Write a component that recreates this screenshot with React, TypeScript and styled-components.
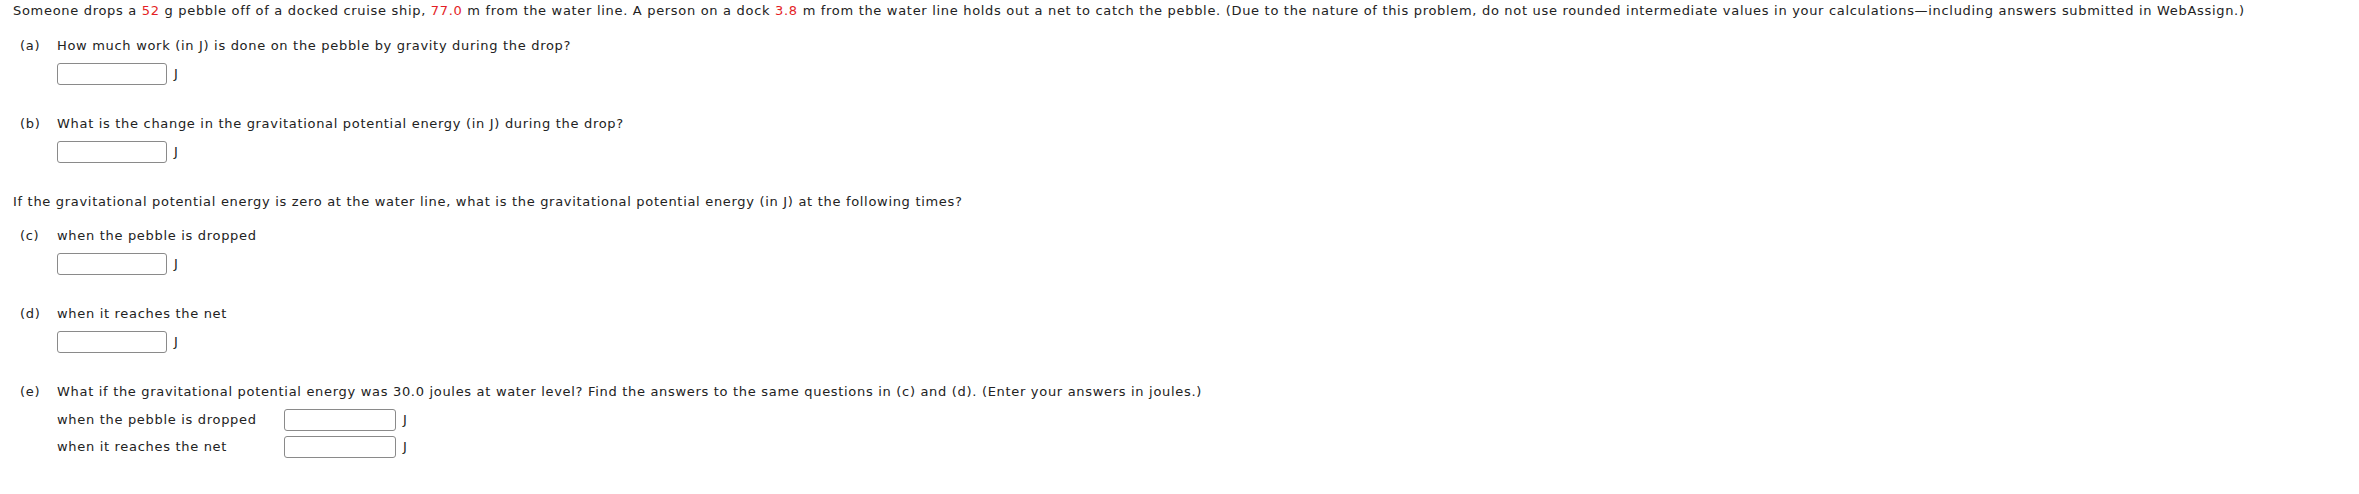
import React from "react";
import styled, {createGlobalStyle} from "styled-components";

const GlobalStyle = createGlobalStyle`
  html, body {
    margin: 0;
    padding: 0;
    background: #ffffff;
  }
  body {
    font-family: Verdana, "DejaVu Sans", sans-serif;
    font-size: 13px;
    letter-spacing: 0.69px;
    color: #222222;
  }
`;

const Page = styled.div`
  padding: 3px 0 0 13px;
  line-height: 16px;
`;

const Intro = styled.div`
  white-space: nowrap;
`;

const Value = styled.span`
  color: #e41e26;
`;

const Part = styled.div<{ $top: number }>`
  display: grid;
  grid-template-columns: 37px auto;
  margin-top: ${p => p.$top}px;
  margin-left: 7px;
`;

const PartLabel = styled.span``;

const PartBody = styled.div`
  display: flex;
  flex-direction: column;
`;

const Question = styled.div`
  white-space: nowrap;
`;

const AnswerRow = styled.div<{ $top?: number }>`
  display: flex;
  align-items: center;
  gap: 7px;
  margin-top: ${p => p.$top ?? 9}px;
`;

const AnswerBox = styled.input<{ $width?: number }>`
  box-sizing: border-box;
  width: ${p => p.$width ?? 110}px;
  height: 22px;
  border: 1px solid #8a8a8a;
  border-radius: 3px;
  background: #ffffff;
  padding: 0 4px;
  margin: 0;
  font: inherit;
`;

const Unit = styled.span``;

const Lead = styled.div<{ $top: number }>`
  margin-top: ${p => p.$top}px;
  white-space: nowrap;
`;

const SubGrid = styled.div`
  display: grid;
  grid-template-columns: 227px auto;
  row-gap: 5px;
  margin-top: 9px;
  align-items: center;
`;

const SubLabel = styled.span`
  white-space: nowrap;
`;

interface PartProps {
    label: string;
    top: number;
    question: React.ReactNode;
}

const SimplePart: React.FC<PartProps> = ({label, top, question}) => (
    <Part $top={top}>
        <PartLabel>{label}</PartLabel>
        <PartBody>
            <Question>{question}</Question>
            <AnswerRow>
                <AnswerBox type="text"/>
                <Unit>J</Unit>
            </AnswerRow>
        </PartBody>
    </Part>
);

const App: React.FC = () => {
    return (
        <Page>
            <GlobalStyle/>
            <Intro>
                Someone drops a <Value>52</Value> g pebble off of a docked cruise ship, <Value>77.0</Value> m from
                the water line. A person on a dock <Value>3.8</Value> m from the water line holds out a net to catch
                the pebble. (Due to the nature of this problem, do not use rounded intermediate values in your
                calculations—including answers submitted in WebAssign.)
            </Intro>
            <SimplePart label="(a)" top={19} question="How much work (in J) is done on the pebble by gravity during the drop?"/>
            <SimplePart label="(b)" top={31} question="What is the change in the gravitational potential energy (in J) during the drop?"/>
            <Lead $top={31}>
                If the gravitational potential energy is zero at the water line, what is the gravitational potential
                energy (in J) at the following times?
            </Lead>
            <SimplePart label="(c)" top={18} question="when the pebble is dropped"/>
            <SimplePart label="(d)" top={31} question="when it reaches the net"/>
            <Part $top={31}>
                <PartLabel>(e)</PartLabel>
                <PartBody>
                    <Question>
                        What if the gravitational potential energy was 30.0 joules at water level? Find the answers to
                        the same questions in (c) and (d). (Enter your answers in joules.)
                    </Question>
                    <SubGrid>
                        <SubLabel>when the pebble is dropped</SubLabel>
                        <AnswerRow $top={0}>
                            <AnswerBox type="text" $width={112}/>
                            <Unit>J</Unit>
                        </AnswerRow>
                        <SubLabel>when it reaches the net</SubLabel>
                        <AnswerRow $top={0}>
                            <AnswerBox type="text" $width={112}/>
                            <Unit>J</Unit>
                        </AnswerRow>
                    </SubGrid>
                </PartBody>
            </Part>
        </Page>
    );
};

export default App;
